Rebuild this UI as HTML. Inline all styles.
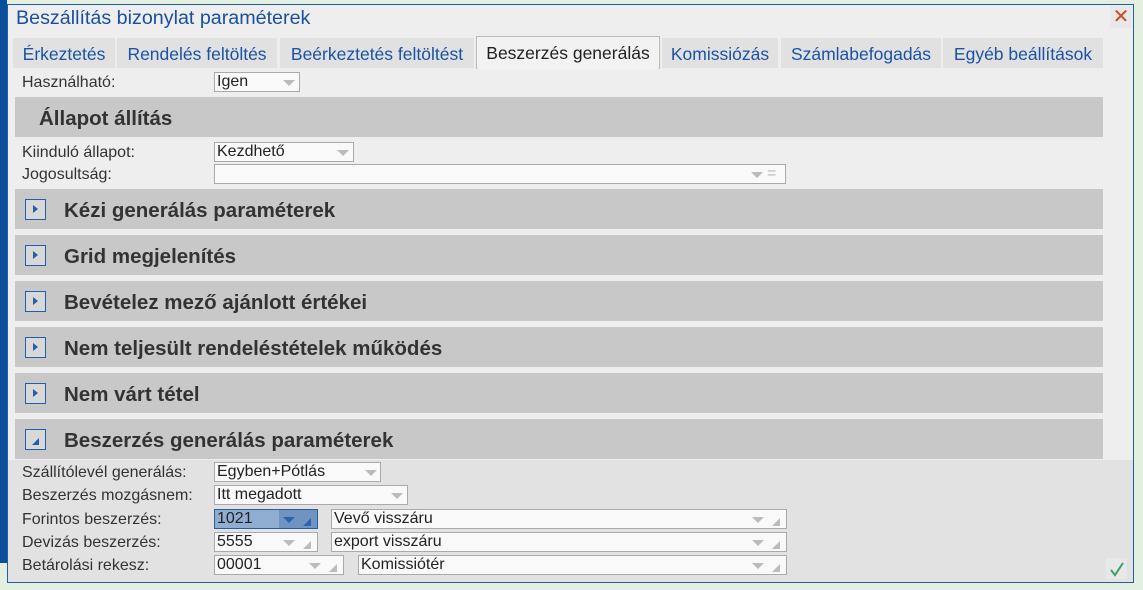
<!DOCTYPE html>
<html><head><meta charset="utf-8"><style>
*{margin:0;padding:0;box-sizing:border-box}
body{width:1143px;height:590px;background:#e3f0e1;position:relative;overflow:hidden;font-family:"Liberation Sans",sans-serif;font-size:16px;color:#333}
.a{position:absolute}
.strip{left:0;top:0;width:7px;height:563px;background:#0a4f9c}
.dlg{left:7px;top:4px;width:1127px;height:579px;background:#eeeeee;border:1px solid #1e5fa8}
.title{left:16px;top:7px;font-size:19.7px;color:#1a4f9f}
.tab{top:38px;height:30px;background:#e1e1e1;color:#1a53a5;font-size:17.5px;line-height:32px;text-align:center;white-space:nowrap}
.tab.act{top:36px;height:33px;background:#f2f2f2;border:1px solid #bbb;border-bottom:none;color:#222}
.lbl{left:22px;font-size:16px;color:#333}
.sel{height:20px;background:#f9f9f9;border:1px solid #aaa;font-size:16px;line-height:18px;padding-left:2px;color:#222}
.dd{position:absolute;top:7px;width:0;height:0;border-left:6px solid transparent;border-right:6px solid transparent;border-top:6px solid #bbb}
.rs{position:absolute;top:8px;width:0;height:0;border-left:8px solid transparent;border-bottom:8px solid #bbb}
.bar{left:15px;width:1088px;height:40px;background:#c8c8c8}
.bar b{position:absolute;left:49px;top:10px;font-size:20.5px;color:#333}
.ic{position:absolute;left:10px;top:10px;width:21px;height:21px;border:1px solid #2060aa;background:#d8d8d8}
.ic:after{content:"";position:absolute;left:7px;top:5px;border-top:4px solid transparent;border-bottom:4px solid transparent;border-left:5px solid #2060aa}
.ic.open:after{left:6px;top:8px;border:none;border-left:7px solid transparent;border-bottom:7px solid #2060aa}
</style></head><body>
<div class="a strip"></div>
<div class="a dlg"></div>
<div class="a" style="left:8px;top:460px;width:1125px;height:122px;background:#e2e2e2"></div>
<div class="a title">Beszállítás bizonylat paraméterek</div>
<div class="a" style="left:1110px;top:6px;width:22px;height:22px;background:#e8e8e8;color:#d04a2a;font-size:20px;line-height:22px;text-align:center">✕</div>
<div class="a tab" style="left:13px;width:102px">Érkeztetés</div>
<div class="a tab" style="left:117px;width:160px">Rendelés feltöltés</div>
<div class="a tab" style="left:280px;width:194px">Beérkeztetés feltöltést</div>
<div class="a tab act" style="left:476px;width:184px">Beszerzés generálás</div>
<div class="a tab" style="left:662px;width:116px">Komissiózás</div>
<div class="a tab" style="left:781px;width:160px">Számlabefogadás</div>
<div class="a tab" style="left:943px;width:160px">Egyéb beállítások</div>

<div class="a lbl" style="top:74px">Használható:</div>
<div class="a sel" style="left:214px;top:72px;width:86px">Igen<span class="dd" style="left:68px"></span></div>
<div class="a bar" style="top:97px"><b style="left:24px">Állapot állítás</b></div>
<div class="a lbl" style="top:144px">Kiinduló állapot:</div>
<div class="a sel" style="left:214px;top:142px;width:140px">Kezdhető<span class="dd" style="left:122px"></span></div>
<div class="a lbl" style="top:166px">Jogosultság:</div>
<div class="a sel" style="left:214px;top:164px;width:572px"><span class="dd" style="left:536px"></span><span style="position:absolute;left:552px;top:0px;color:#bbb;font-size:16px">=</span></div>

<div class="a bar" style="top:189px"><span class="ic"></span><b>Kézi generálás paraméterek</b></div>
<div class="a bar" style="top:235px"><span class="ic"></span><b>Grid megjelenítés</b></div>
<div class="a bar" style="top:281px"><span class="ic"></span><b>Bevételez mező ajánlott értékei</b></div>
<div class="a bar" style="top:327px"><span class="ic"></span><b>Nem teljesült rendeléstételek működés</b></div>
<div class="a bar" style="top:373px"><span class="ic"></span><b>Nem várt tétel</b></div>
<div class="a bar" style="top:419px"><span class="ic open"></span><b>Beszerzés generálás paraméterek</b></div>

<div class="a lbl" style="top:464px">Szállítólevél generálás:</div>
<div class="a sel" style="left:214px;top:462px;width:167px">Egyben+Pótlás<span class="dd" style="left:150px"></span></div>
<div class="a lbl" style="top:487px">Beszerzés mozgásnem:</div>
<div class="a sel" style="left:214px;top:485px;width:194px">Itt megadott<span class="dd" style="left:176px"></span></div>
<div class="a lbl" style="top:511px">Forintos beszerzés:</div>
<div class="a sel" style="left:214px;top:509px;width:104px;background:#8fadd0;border-color:#2a5d9c">1021<span style="position:absolute;left:64px;top:0;width:38px;height:18px;background:#6f94c2"></span><span class="dd" style="left:68px;border-top-color:#2a64b0"></span><span class="rs" style="left:88px;border-bottom-color:#2a64b0"></span></div>
<div class="a sel" style="left:331px;top:509px;width:456px">Vevő visszáru<span class="dd" style="left:420px"></span><span class="rs" style="left:440px"></span></div>
<div class="a lbl" style="top:534px">Devizás beszerzés:</div>
<div class="a sel" style="left:214px;top:532px;width:104px">5555<span class="dd" style="left:68px"></span><span class="rs" style="left:88px"></span></div>
<div class="a sel" style="left:331px;top:532px;width:456px">export visszáru<span class="dd" style="left:420px"></span><span class="rs" style="left:440px"></span></div>
<div class="a lbl" style="top:557px">Betárolási rekesz:</div>
<div class="a sel" style="left:214px;top:555px;width:130px">00001<span class="dd" style="left:94px"></span><span class="rs" style="left:114px"></span></div>
<div class="a sel" style="left:358px;top:555px;width:429px">Komissiótér<span class="dd" style="left:393px"></span><span class="rs" style="left:413px"></span></div>
<div class="a" style="left:1106px;top:558px;width:21px;height:21px;background:#e8e8e8"><svg width="21" height="21"><path d="M5 12 L9 17 L17 5" stroke="#3aa06a" stroke-width="2" fill="none"/></svg></div>
</body></html>
